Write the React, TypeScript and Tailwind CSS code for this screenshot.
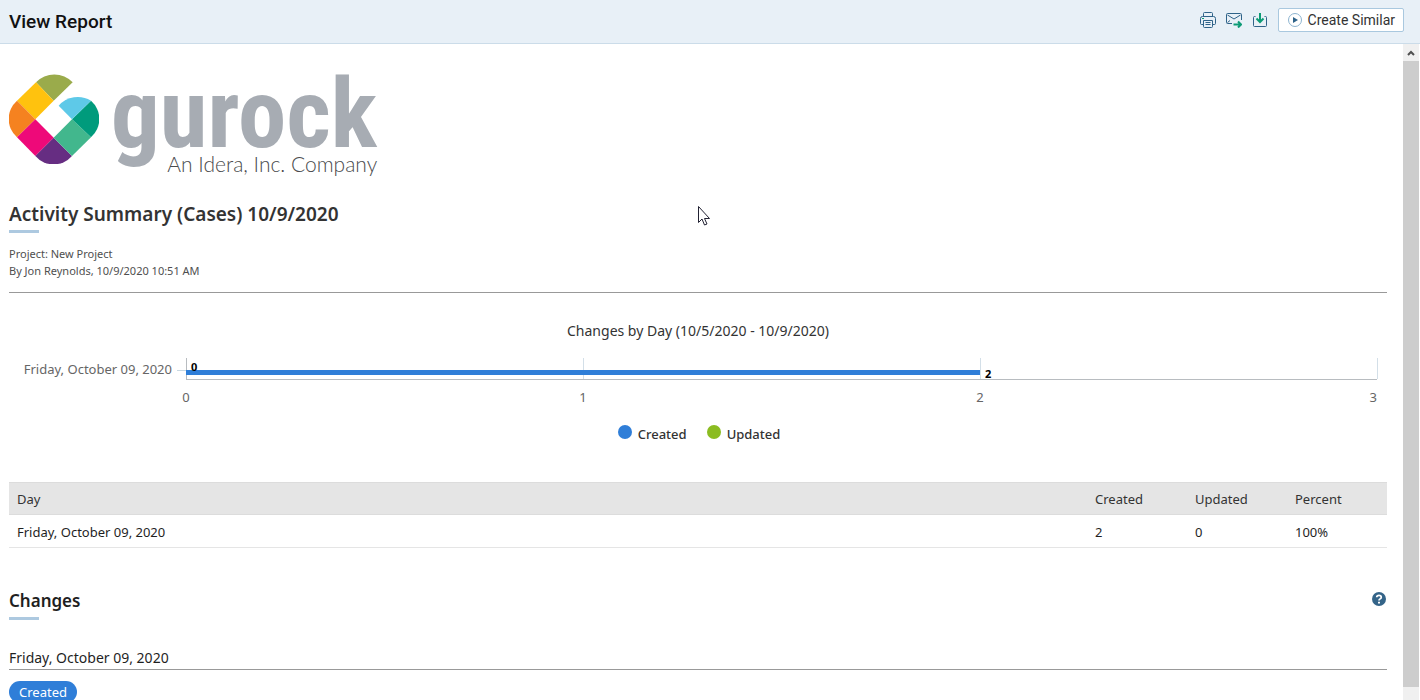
import React from 'react';

const summary = [{ day: 'Friday, October 09, 2020', created: 2, updated: 0, percent: '100%' }];

const AXIS_MAX = 3;
const pct = (value: number) => `${(value / AXIS_MAX) * 100}%`;

function PrintIcon() {
  return (
    <svg className="h-4 w-4" viewBox="0 0 16 16" fill="none" stroke="#2f6389" strokeLinejoin="round">
      <path d="M3.5 4.5V1.5Q3.5 .5 4.5 .5h7q1 0 1 1v3M3.5 12.5H1.5Q.5 12.5 .5 11.5v-5q0-2 2-2h11q2 0 2 2v5q0 1-1 1h-2" />
      <path d="M3.5 8.5h9v6q0 1-1 1h-7q-1 0-1-1zM5.5 10.5h5M5.5 12.5h5" />
      <path d="M2 6.5h2" stroke="#0d9b76" />
    </svg>
  );
}

function MailIcon() {
  return (
    <svg className="h-4 w-4" viewBox="0 0 16 16" fill="none" stroke="#2f6389" strokeLinejoin="round">
      <path d="M6 11.5H1.5q-1 0-1-1v-8q0-1 1-1h13q1 0 1 1V8M1.5 3l6.5 4 6.5-4M1.5 10.5l2.5-2" />
      <path d="M7.5 12.5h7M12 9.5l3 3-3 3" stroke="#0d9b76" strokeWidth="2" strokeLinejoin="miter" />
    </svg>
  );
}

function DownloadIcon() {
  return (
    <svg className="h-4 w-4" viewBox="0 0 16 16" fill="none" stroke="#2f6389" strokeLinejoin="round">
      <path d="M3.5 4.5h-1q-1 0-1 1v8q0 1 1 1h11q1 0 1-1v-8q0-1-1-1h-1" />
      <path d="M8 1v8" stroke="#0d9b76" strokeWidth="2" />
      <path d="M4.5 6.5L8 10l3.5-3.5" stroke="#0d9b76" strokeWidth="2" strokeLinejoin="miter" />
    </svg>
  );
}

function Logo() {
  return (
    <div className="flex h-[104px] gap-3">
      <svg className="h-[90px] w-[90px] shrink-0" viewBox="0 0 270 270">
        <path fill="#9aab4b" d="M81 25A76 76 0 0 1 191 25L134 80Z" />
        <path fill="#ffc20e" d="M81 25L134 80L79 136L24 80Z" />
        <path fill="#f58220" d="M24 80L79 136L24 190A73 73 0 0 1 24 80Z" />
        <path fill="#ee0979" d="M79 136L134 191L79 246L24 190Z" />
        <path fill="#662d82" d="M134 191L189 246A73 73 0 0 1 79 246Z" />
        <path fill="#42b78d" d="M189 136L246 190L189 246L134 191Z" />
        <path fill="#009b7c" d="M246 80A73 73 0 0 1 246 190L189 136Z" />
        <path fill="#5ec9e8" d="M149 95A76 76 0 0 1 246 80L189 136Z" />
      </svg>
      <div className="flex flex-col items-end">
        <span className="font-['Roboto_Condensed','Liberation_Sans_Narrow',sans-serif] text-[97px] leading-[80px] font-bold text-[#a7acb3]">
          gurock
        </span>
        <span className="font-['Lato',sans-serif] text-[21px] leading-5 font-light text-[#4a4b4d]">
          An Idera, Inc. Company
        </span>
      </div>
    </div>
  );
}

function ChangesChart() {
  return (
    <figure className="mt-7">
      <figcaption className="text-center text-[14px] leading-5 text-[#333]">
        Changes by Day (10/5/2020 - 10/9/2020)
      </figcaption>
      <div className="mt-4 mr-[10px] ml-[177px]">
        <svg className="block h-[52px] w-full overflow-visible">
          {[1, 2, 3].map((tick) => (
            <line key={tick} x1={pct(tick)} x2={pct(tick)} y1="1" y2="22" stroke="#d3dfe8" shapeRendering="crispEdges" />
          ))}
          <line x1="-9" x2="0" y1="13" y2="13" stroke="#c8d8e2" shapeRendering="crispEdges" />
          <line x1="0" x2="0" y1="1" y2="22" stroke="#b8bcc0" shapeRendering="crispEdges" />
          <line x1="0" x2="100%" y1="22" y2="22" stroke="#b8bcc0" shapeRendering="crispEdges" />
          {summary.map((row) => (
            <React.Fragment key={row.day}>
              <rect x="0" y="13" width={pct(row.created)} height="5" fill="#2f7ed8" />
              <text x="-14" y="17" textAnchor="end" fontSize="13" fill="#666">{row.day}</text>
              <g fontSize="11" fontWeight="700" fill="#000">
                <text x={pct(row.updated)} dx="5" y="14">{row.updated}</text>
                <text x={pct(row.created)} dx="5" y="21">{row.created}</text>
              </g>
            </React.Fragment>
          ))}
          <g fontSize="13" fill="#666" textAnchor="middle">
            <text x="0" y="45">0</text>
            <text x={pct(1)} y="45">1</text>
            <text x={pct(2)} y="45">2</text>
            <text x="100%" y="45" textAnchor="end">3</text>
          </g>
        </svg>
      </div>
      <div className="mt-[15px] flex justify-center gap-5 pl-0.5 text-[13px] leading-5 font-medium text-[#333]">
        <span className="flex items-start gap-1.5">
          <i className="mt-px h-3.5 w-3.5 rounded-full bg-[#2f7ed8]" />
          Created
        </span>
        <span className="flex items-start gap-1.5">
          <i className="mt-px h-3.5 w-3.5 rounded-full bg-[#8bbc21]" />
          Updated
        </span>
      </div>
    </figure>
  );
}

function SummaryTable() {
  return (
    <table className="mt-[38px] w-full table-fixed text-left text-[13px] leading-4 text-[#1f1f1f]">
      <thead>
        <tr className="h-8 border-y border-[#dcdcdc] bg-[#e5e5e5] text-[#333]">
          <th className="px-2 font-normal">Day</th>
          <th className="w-[100px] px-2 font-normal">Created</th>
          <th className="w-[100px] px-2 font-normal">Updated</th>
          <th className="w-[100px] px-2 font-normal">Percent</th>
        </tr>
      </thead>
      <tbody>
        {summary.map((row) => (
          <tr key={row.day} className="h-[33px] border-b border-[#e5e5e5]">
            <td className="px-2 pt-0.5">{row.day}</td>
            <td className="px-2 pt-0.5">{row.created}</td>
            <td className="px-2 pt-0.5">{row.updated}</td>
            <td className="px-2 pt-0.5">{row.percent}</td>
          </tr>
        ))}
      </tbody>
    </table>
  );
}

export default function App() {
  return (
    <div className="relative flex h-screen flex-col overflow-hidden bg-white font-['Noto_Sans',sans-serif] text-[#1f1f1f]">
      <header className="flex h-11 shrink-0 items-center justify-between border-b border-[#cbdce9] bg-[#e8f0f7] pr-4 pb-[3px] pl-[9px] font-['Roboto',sans-serif]">
        <h1 className="pt-1 text-[19px] leading-6 font-medium text-[#111]">View Report</h1>
        <div className="flex items-center gap-2.5">
          <button type="button" aria-label="Print"><PrintIcon /></button>
          <button type="button" aria-label="Send by email"><MailIcon /></button>
          <button type="button" aria-label="Download"><DownloadIcon /></button>
          <button
            type="button"
            className="flex h-6 items-center gap-[5px] rounded-xs border border-[#a9c8df] bg-white px-2 text-[14px] text-[#333]"
          >
            <svg className="h-4 w-4" viewBox="0 0 16 16">
              <circle cx="8" cy="8" r="6.5" fill="none" stroke="#8db4d0" />
              <path d="M6 5l5 3-5 3z" fill="#2f6389" />
            </svg>
            Create Similar
          </button>
        </div>
      </header>

      <div className="flex min-h-0 flex-1">
        <main className="min-w-0 flex-1 overflow-hidden pt-[30px] pr-4 pl-[9px]">
          <Logo />

          <h2 className="mt-6 text-[19px] leading-6 font-semibold text-[#333]">
            Activity Summary (Cases) 10/9/2020
          </h2>
          <div className="mt-1 h-[3px] w-[30px] bg-[#adc9e0]" />
          <div className="mt-3 border-b border-[#999] pb-[13px] text-[11px] leading-[17px] text-[#4f4f4f]">
            <p>Project: New Project</p>
            <p>By Jon Reynolds, 10/9/2020 10:51 AM</p>
          </div>

          <ChangesChart />
          <SummaryTable />

          <div className="mt-[41px] flex items-start justify-between">
            <h2 className="text-[17px] leading-6 font-semibold">Changes</h2>
            <a href="#help" aria-label="Help" className="pt-0.5">
              <svg className="h-4 w-4" viewBox="0 0 16 16">
                <circle cx="8" cy="8" r="7" fill="#346488" />
                <path d="M5.7 6.3Q5.8 4.4 8 4.4T10.3 6.2Q10.3 7.3 8.900 8Q8 8.400 8 9.500" fill="none" stroke="#fff" strokeWidth="1.7" />
                <path d="M7 10.7h2v1.8H7z" fill="#fff" />
              </svg>
            </a>
          </div>
          <div className="mt-1 h-[3px] w-[30px] bg-[#adc9e0]" />

          <h3 className="mt-7 border-b border-[#999] pb-px text-[14px] leading-5">Friday, October 09, 2020</h3>
          <span className="mt-[11px] inline-block rounded-full bg-[#2f7ed8] px-2.5 text-[13px] leading-[22px] text-white">
            Created
          </span>
        </main>

        <div className="mr-px flex w-4 shrink-0 flex-col bg-[#f0f0f0]" aria-hidden="true">
          <div className="flex h-[17px] items-center justify-center">
            <svg className="h-2 w-2" viewBox="0 0 8 8" fill="none" stroke="#505050" strokeWidth="2">
              <path d="M1 6l3-3 3 3" />
            </svg>
          </div>
          <div className="mb-[13px] flex-1 bg-[#cdcdcd]" />
        </div>
      </div>

      {/* mouse pointer */}
      <svg className="absolute top-[206px] left-[698px] h-5 w-3" viewBox="0 0 12 20">
        <path d="M.5 .5V16.5L4 13l2.5 6 2.5-1-2.5-5.5H11.5z" fill="#fff" stroke="#223" />
      </svg>
    </div>
  );
}
